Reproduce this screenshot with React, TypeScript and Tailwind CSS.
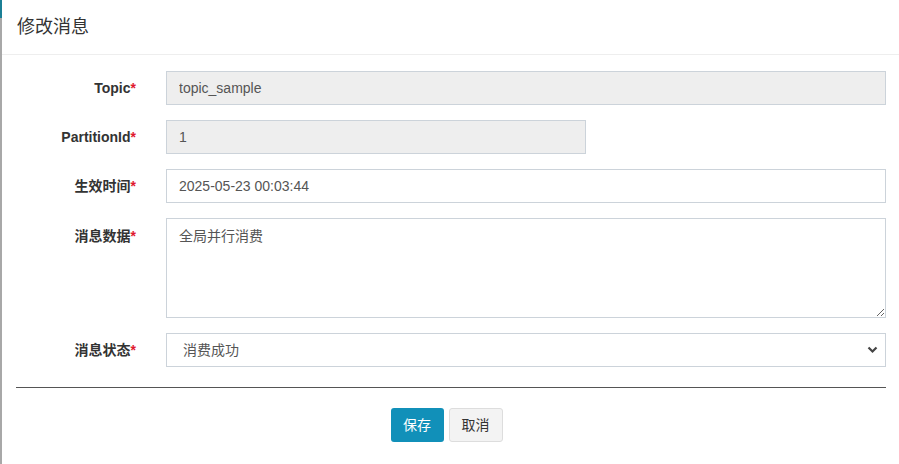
import React from 'react';

const font = { fontFamily: '"Liberation Sans", "Noto Sans CJK SC", sans-serif' };

function Label({ text, top }: { text: string; top?: boolean }) {
  return (
    <div className={`w-[134px] shrink-0 text-right text-[14px] font-bold text-[#333] ${top ? 'pt-[8px]' : ''}`}>
      {text}
      <span className="text-[#e0192f]">*</span>
    </div>
  );
}

export default function App() {
  return (
    <div className="flex h-[464px] w-full bg-white" style={font}>
      <div className="flex w-[2px] shrink-0 flex-col bg-[#a8a8a8]">
        <div className="h-[18px] bg-[#1b7f95]" />
      </div>
      <div className="flex flex-1 flex-col">
        <div className="flex h-[55px] items-center border-b border-[#eeeeee] pl-[15px] text-[18px] text-[#333]">修改消息</div>

        <div className="flex flex-col pt-[16px]">
          <div className="flex items-center">
            <Label text="Topic" />
            <input
              readOnly
              value="topic_sample"
              className="ml-[30px] h-[34px] w-[720px] border border-[#ccd3da] bg-[#eeeeee] px-[12px] text-[14px] text-[#555] outline-none"
            />
          </div>
          <div className="mt-[15px] flex items-center">
            <Label text="PartitionId" />
            <input
              readOnly
              value="1"
              className="ml-[30px] h-[34px] w-[420px] border border-[#ccd3da] bg-[#eeeeee] px-[12px] text-[14px] text-[#555] outline-none"
            />
          </div>
          <div className="mt-[15px] flex items-center">
            <Label text="生效时间" />
            <input
              readOnly
              value="2025-05-23 00:03:44"
              className="ml-[30px] h-[34px] w-[720px] border border-[#ccd3da] bg-white px-[12px] text-[14px] text-[#555] outline-none"
            />
          </div>
          <div className="mt-[15px] flex items-start">
            <Label text="消息数据" top />
            <textarea
              readOnly
              value="全局并行消费"
              className="ml-[30px] h-[100px] w-[720px] border border-[#ccd3da] bg-white px-[12px] py-[7px] text-[14px] leading-[20px] text-[#555] outline-none"
            />
          </div>
          <div className="mt-[15px] flex items-center">
            <Label text="消息状态" />
            <div className="relative ml-[30px] w-[720px]">
              <select
                defaultValue="1"
                className="h-[34px] w-full appearance-none border border-[#ccd3da] bg-white pl-[16px] text-[14px] text-[#555] outline-none"
              >
                <option value="1">消费成功</option>
              </select>
              <svg className="pointer-events-none absolute right-[8px] top-[13px]" width="11" height="8" viewBox="0 0 11 8">
                <path d="M1.5 1.5 L5.5 5.5 L9.5 1.5" fill="none" stroke="#444" strokeWidth="2.2" />
              </svg>
            </div>
          </div>
        </div>

        <div className="ml-[14px] mr-[13px] mt-[20px] h-px bg-[#555]" />

        <div className="mt-[20px] flex justify-center gap-[5px] pr-[8px]">
          <button className="h-[34px] w-[53px] rounded-[3px] bg-[#1190b9] text-[14px] text-white">保存</button>
          <button className="h-[34px] w-[54px] rounded-[3px] border border-[#dddddd] bg-[#f3f3f3] text-[14px] text-[#333]">取消</button>
        </div>
      </div>
    </div>
  );
}
